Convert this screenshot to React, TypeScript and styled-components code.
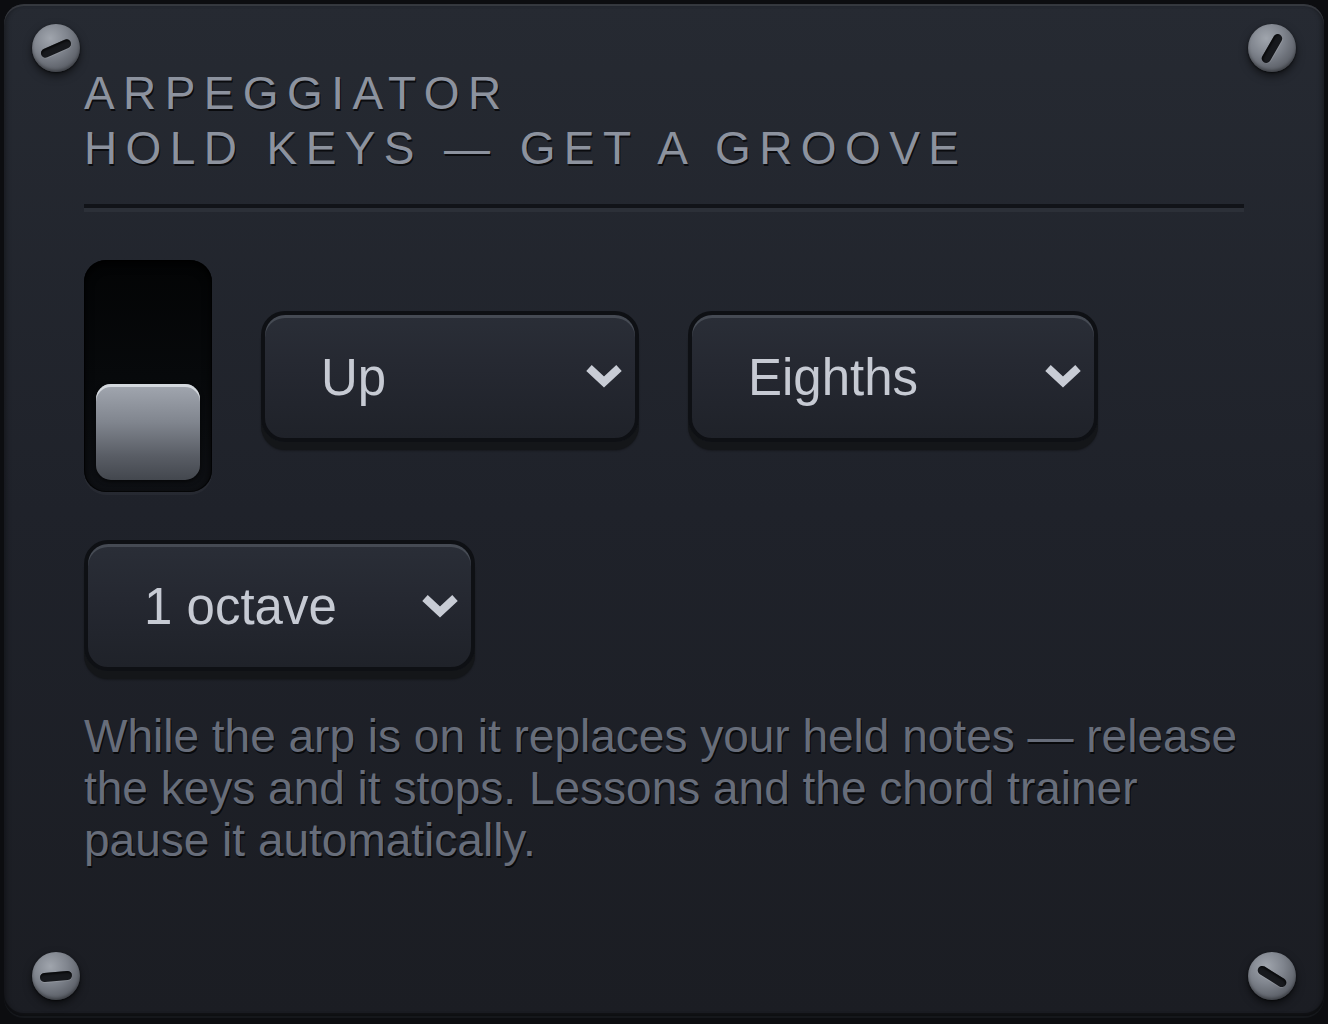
import React from "react";
import styled, { createGlobalStyle } from "styled-components";

const Global = createGlobalStyle`
  html, body { margin: 0; padding: 0; background: #0c0d10; }
  body { padding: 4px 4px 8px 4px; box-sizing: border-box; height: 100vh; }
  #root { height: 100%; }
  * { box-sizing: border-box; }
`;

const FONT = `"Liberation Sans", Arial, Helvetica, sans-serif`;

const Panel = styled.section`
  position: relative;
  height: 100%;
  border-radius: 20px;
  background: linear-gradient(180deg, #262a32 0%, #1f222a 50%, #1b1d23 100%);
  box-shadow: inset 0 2px 0 rgba(255, 255, 255, 0.1), inset 0 -3px 0 rgba(0, 0, 0, 0.35),
    inset 3px 0 4px rgba(0, 0, 0, 0.25), inset -3px 0 4px rgba(0, 0, 0, 0.25),
    0 2px 0 #15171b;
  padding: 62px 80px 0 80px;
  font-family: ${FONT};
`;

const Screw = styled.div<{ $v: "top" | "bottom"; $h: "left" | "right"; $angle: number }>`
  position: absolute;
  ${(p) => (p.$v === "top" ? "top: 20px;" : "bottom: 16px;")}
  ${(p) => (p.$h === "left" ? "left: 28px;" : "right: 28px;")}
  width: 48px;
  height: 48px;
  border-radius: 50%;
  background: radial-gradient(circle at 38% 30%, #a0a5ad 0%, #80858e 38%, #5a5e66 75%, #474a51 100%);
  box-shadow: 0 4px 8px rgba(0, 0, 0, 0.55), 0 1px 2px rgba(0, 0, 0, 0.6),
    inset 0 -2px 3px rgba(0, 0, 0, 0.3);
  &::after {
    content: "";
    position: absolute;
    left: 8px;
    top: 20px;
    width: 32px;
    height: 9px;
    border-radius: 5px;
    background: #17191d;
    box-shadow: inset 0 2px 2px rgba(0, 0, 0, 0.6), 0 1px 0 rgba(255, 255, 255, 0.12);
    transform: rotate(${(p) => p.$angle}deg);
  }
`;

const Heading = styled.h1`
  margin: 0;
  font-family: ${FONT};
  font-weight: 400;
  font-size: 46px;
  line-height: 55px;
  letter-spacing: 8.4px;
  text-transform: uppercase;
  color: #8c929e;
  text-shadow: 1px 2px 0 #0a0b0e;
  white-space: nowrap;
`;

const Divider = styled.hr`
  margin: 28px 0 0 0;
  height: 0;
  border: none;
  border-top: 4px solid #111318;
  border-bottom: 4px solid #2c3038;
`;

const Controls = styled.div`
  display: flex;
  flex-direction: column;
  gap: 48px;
  margin-top: 48px;
`;

const Row = styled.div`
  display: flex;
  align-items: center;
  gap: 49px;
`;

const Track = styled.div`
  width: 128px;
  height: 232px;
  border-radius: 22px;
  background: linear-gradient(180deg, #030405 0%, #07090b 50%, #0e1014 100%);
  box-shadow: inset 0 4px 10px rgba(0, 0, 0, 0.9), inset 0 0 0 1px rgba(0, 0, 0, 0.6),
    0 3px 0 rgba(255, 255, 255, 0.035);
  display: flex;
  flex-direction: column;
  justify-content: flex-end;
  padding: 12px;
`;

const Thumb = styled.div`
  height: 96px;
  border-radius: 15px;
  background: linear-gradient(180deg, #a2a7b0 0%, #80858e 40%, #595d65 75%, #43474e 100%);
  box-shadow: inset 0 3px 0 rgba(230, 233, 238, 0.75), 0 2px 4px rgba(0, 0, 0, 0.6);
`;

const SelectBox = styled.button<{ $w: number }>`
  width: ${(p) => p.$w}px;
  height: 131px;
  flex: none;
  display: flex;
  align-items: center;
  justify-content: space-between;
  padding: 0 12px 0 56px;
  border: 4px solid #0e1014;
  border-radius: 24px;
  background: linear-gradient(180deg, #2a2e37 0%, #252831 45%, #1f2229 100%);
  box-shadow: inset 0 3px 0 #454a53, 0 8px 0 #141619, 0 9px 2px rgba(0, 0, 0, 0.3);
  font-family: ${FONT};
  font-size: 51px;
  color: #c6cad3;
  cursor: pointer;
  text-align: left;
`;

const Label = styled.span`
  line-height: 1;
  margin-top: 2px;
`;

const Chevron = styled.svg`
  width: 38px;
  height: 26px;
  flex: none;
`;

const Note = styled.p`
  margin: 39px 0 0 0;
  max-width: 1160px;
  font-family: ${FONT};
  font-size: 46px;
  line-height: 52px;
  color: #676d7a;
  text-shadow: 1px 2px 0 #08090b;
`;

function Select({ value, width }: { value: string; width: number }) {
  return (
    <SelectBox $w={width} type="button">
      <Label>{value}</Label>
      <Chevron viewBox="0 0 38 26">
        <polyline
          points="4,5 19,19 34,5"
          fill="none"
          stroke="#c8ccd5"
          strokeWidth="8"
          strokeLinejoin="miter"
        />
      </Chevron>
    </SelectBox>
  );
}

export default function App() {
  return (
    <>
      <Global />
      <Panel>
        <Screw $v="top" $h="left" $angle={-24} />
        <Screw $v="top" $h="right" $angle={-60} />
        <Screw $v="bottom" $h="left" $angle={-5} />
        <Screw $v="bottom" $h="right" $angle={32} />
        <Heading>Arpeggiator</Heading>
        <Heading as="h2">Hold keys — get a groove</Heading>
        <Divider />
        <Controls>
          <Row>
            <Track>
              <Thumb />
            </Track>
            <Select value="Up" width={378} />
            <Select value="Eighths" width={410} />
          </Row>
          <Row>
            <Select value="1 octave" width={391} />
          </Row>
        </Controls>
        <Note>
          While the arp is on it replaces your held notes — release the keys and it stops. Lessons and
          the chord trainer pause it automatically.
        </Note>
      </Panel>
    </>
  );
}
